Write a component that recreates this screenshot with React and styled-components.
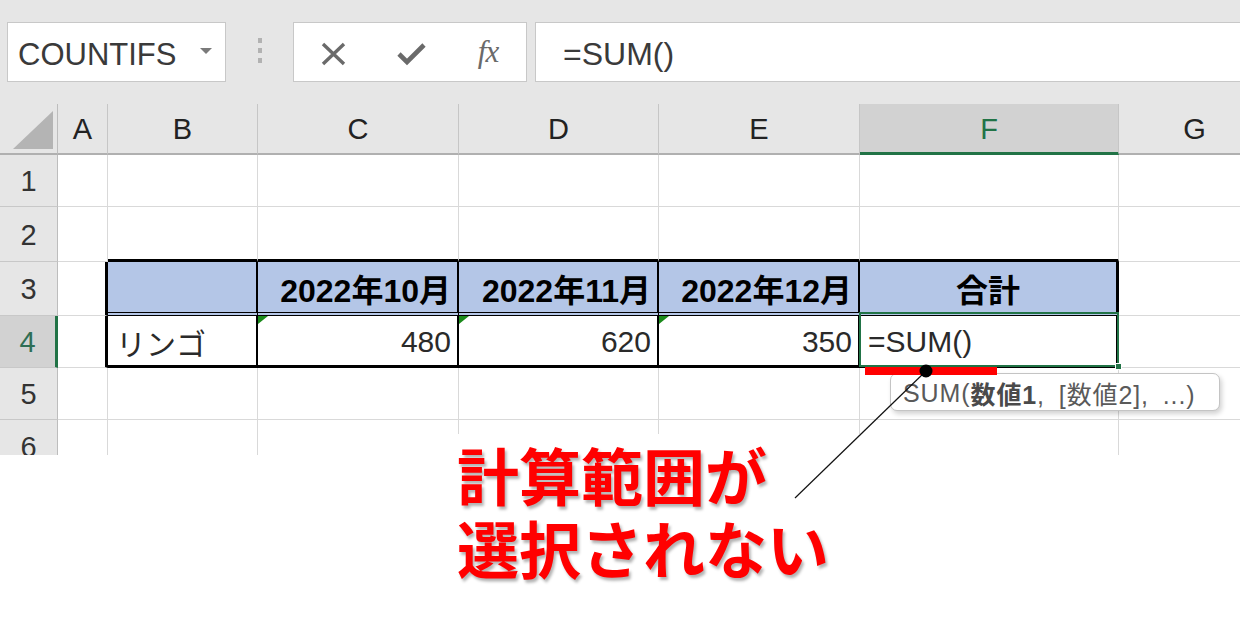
import React from 'react';
import styled, { createGlobalStyle } from 'styled-components';

const Global = createGlobalStyle`
  html, body { margin: 0; padding: 0; background: #fff; }
  body { font-family: "Liberation Sans", "Noto Sans CJK JP", sans-serif; }
  * { box-sizing: border-box; }
`;

const Page = styled.div`
  position: relative;
  width: 1240px;
  height: 639px;
  overflow: hidden;
  background: #fff;
  display: flex;
  flex-direction: column;
`;

const FormulaBar = styled.div`
  height: 104px;
  flex: none;
  background: #e6e6e6;
  display: flex;
  align-items: flex-start;
  padding: 22px 0 0 7px;
`;

const NameBox = styled.div`
  width: 219px;
  height: 60px;
  background: #fff;
  border: 1px solid #c8c8c8;
  display: flex;
  align-items: center;
  justify-content: space-between;
  padding: 5px 13px 0 10px;
  font-size: 31px;
  color: #3a3a3a;
`;

const DropArrow = styled.span`
  width: 0;
  height: 0;
  margin-top: -8px;
  border-left: 6px solid transparent;
  border-right: 6px solid transparent;
  border-top: 6px solid #7a7a7a;
`;

const Grip = styled.div`
  width: 67px;
  height: 60px;
  display: flex;
  flex-direction: column;
  align-items: center;
  justify-content: center;
  gap: 5px;
  padding-bottom: 4px;
`;

const GripDot = styled.span`
  width: 4px;
  height: 5px;
  background: #b2b2b2;
`;

const FuncBox = styled.div`
  width: 234px;
  height: 60px;
  background: #fff;
  border: 1px solid #c8c8c8;
  display: grid;
  grid-template-columns: 78px 78px 76px;
  align-items: center;
  justify-items: center;
  padding-top: 4px;
`;

const FxText = styled.span`
  font-family: "Liberation Serif", serif;
  font-style: italic;
  font-size: 31px;
  color: #6a6a6a;
  letter-spacing: -1px;
  margin-top: -4px;
`;

const FormulaInput = styled.div`
  flex: 1;
  margin-left: 8px;
  height: 60px;
  background: #fff;
  border: 1px solid #c8c8c8;
  border-right: none;
  display: flex;
  align-items: center;
  padding: 4px 0 0 27px;
  font-size: 32px;
  color: #3a3a3a;
`;

const Sheet = styled.div`
  flex: none;
  height: 351px;
  overflow: hidden;
  display: grid;
  grid-template-columns: 58px 50px 150px 201px 200px 201px 259px 152px;
  grid-template-rows: 51px 52px 55px 54px 52px 52px 53px;
  font-size: 29px;
`;

const Corner = styled.div`
  background: #e6e6e6;
  border-right: 1px solid #bdbdbd;
  border-bottom: 2px solid #b0b0b0;
  display: flex;
  align-items: flex-end;
  justify-content: flex-end;
  padding: 0 4px 4px 0;
`;

const ColHead = styled.div`
  background: ${(p) => (p.$active ? '#d2d2d2' : '#e6e6e6')};
  color: ${(p) => (p.$active ? '#217346' : '#222')};
  border-right: 1px solid #c6c6c6;
  border-bottom: ${(p) => (p.$active ? '3px solid #217346' : '2px solid #b0b0b0')};
  display: flex;
  align-items: center;
  justify-content: center;
  padding-top: 2px;
`;

const RowHead = styled.div`
  background: ${(p) => (p.$active ? '#d2d2d2' : '#e6e6e6')};
  color: ${(p) => (p.$active ? '#2f6e55' : '#333')};
  border-right: ${(p) => (p.$active ? '3px solid #217346' : '1px solid #bdbdbd')};
  border-bottom: 1px solid #c8c8c8;
  display: flex;
  align-items: center;
  justify-content: center;
  padding-top: 2px;
`;

const Cell = styled.div`
  position: relative;
  background: ${(p) => (p.$head ? '#b4c6e7' : '#fff')};
  border-right: ${(p) => p.$right};
  border-bottom: ${(p) => p.$bottom};
  display: flex;
  align-items: center;
  justify-content: ${(p) => (p.$align === 'right' ? 'flex-end' : p.$align === 'center' ? 'center' : 'flex-start')};
  padding: 2px 6px 0 ${(p) => (p.$align === 'left' ? '8px' : '6px')};
  font-size: ${(p) => (p.$head ? '32px' : '30px')};
  font-weight: ${(p) => (p.$head ? 700 : 400)};
  color: ${(p) => (p.$head ? '#000' : '#2a2a2a')};
  white-space: nowrap;

  ${(p) =>
    p.$mark &&
    `&::before {
      content: '';
      position: absolute;
      top: 0;
      left: 0;
      width: 0;
      height: 0;
      border-top: 8px solid #1a8a1a;
      border-right: 10px solid transparent;
    }`}

  ${(p) =>
    p.$selected &&
    `&::after {
      content: '';
      position: absolute;
      top: -4px;
      left: -1px;
      right: -3px;
      bottom: -2px;
      border: 2px solid #217346;
    }`}
`;

const FillHandle = styled.span`
  position: absolute;
  right: -6px;
  bottom: -5px;
  width: 7px;
  height: 7px;
  background: #217346;
  border: 1px solid #fff;
  z-index: 2;
`;

const Tooltip = styled.div`
  position: absolute;
  left: 890px;
  top: 373px;
  width: 330px;
  height: 38px;
  background: #fff;
  border: 1px solid #c4c4c4;
  border-radius: 7px;
  box-shadow: 2px 3px 5px rgba(0, 0, 0, 0.18);
  display: flex;
  align-items: center;
  padding: 2px 0 0 12px;
  font-size: 25px;
  color: #5a5a5a;
  white-space: nowrap;
  letter-spacing: 0.9px;
  word-spacing: 6px;
`;

const Strong = styled.b`
  font-weight: 700;
  color: #4a4a4a;
`;

const Callout = styled.div`
  position: absolute;
  left: 400px;
  top: 434px;
  width: 526px;
  height: 205px;
  background: #fff;
  padding: 4px 0 0 57px;
  font-family: "Noto Sans CJK JP", sans-serif;
  font-weight: 700;
  font-size: 62px;
  line-height: 73px;
  color: #ff0000;
  text-shadow: 2px 3px 3px rgba(0, 0, 0, 0.3);
`;

const CalloutLine = styled.div`
  height: 73px;
  white-space: nowrap;
`;

const Overlay = styled.svg`
  position: absolute;
  left: 0;
  top: 0;
  pointer-events: none;
`;

const cols = ['A', 'B', 'C', 'D', 'E', 'F', 'G'];

const data = {
  3: { 1: '', 2: '2022年10月', 3: '2022年11月', 4: '2022年12月', 5: '合計' },
  4: { 1: 'リンゴ', 2: '480', 3: '620', 4: '350', 5: '=SUM()' },
};

const GRID = '1px solid #d9d9d9';

function cellProps(r, c) {
  const inTable = (r === 3 || r === 4) && c >= 1 && c <= 5;
  let right = GRID;
  if (c === 0 && (r === 3 || r === 4)) right = '3px solid #000';
  else if (inTable) right = c === 5 ? '3px solid #000' : '2px solid #000';
  let bottom = GRID;
  if (r === 2 && c >= 1 && c <= 5) bottom = '3px solid #000';
  else if (r === 3 && inTable) bottom = '4px double #000';
  else if (r === 4 && inTable) bottom = '3px solid #000';
  let align = 'left';
  if (r === 3 && c >= 2 && c <= 4) align = 'right';
  if (r === 3 && c === 5) align = 'center';
  if (r === 4 && c >= 2 && c <= 4) align = 'right';
  return {
    $right: right,
    $bottom: bottom,
    $align: align,
    $head: r === 3 && inTable,
    $mark: r === 4 && c >= 2 && c <= 4,
    $selected: r === 4 && c === 5,
  };
}

export default function App() {
  const rows = [1, 2, 3, 4, 5, 6];
  return (
    <Page>
      <Global />
      <FormulaBar>
        <NameBox>
          <span>COUNTIFS</span>
          <DropArrow />
        </NameBox>
        <Grip>
          <GripDot />
          <GripDot />
          <GripDot />
        </Grip>
        <FuncBox>
          <svg width="27" height="24" viewBox="0 0 27 24">
            <path d="M3 2 L24 22 M24 2 L3 22" stroke="#6a6a6a" strokeWidth="3.4" fill="none" />
          </svg>
          <svg width="29" height="24" viewBox="0 0 29 24">
            <path d="M2 12 L10 20 L27 3" stroke="#6a6a6a" strokeWidth="4.6" fill="none" strokeLinejoin="miter" />
          </svg>
          <FxText>fx</FxText>
        </FuncBox>
        <FormulaInput>=SUM()</FormulaInput>
      </FormulaBar>
      <Sheet>
        <Corner>
          <svg width="40" height="38" viewBox="0 0 40 38">
            <polygon points="0,38 40,38 40,0" fill="#b4b4b4" />
          </svg>
        </Corner>
        {cols.map((c) => (
          <ColHead key={c} $active={c === 'F'}>
            {c}
          </ColHead>
        ))}
        {rows.map((r) => (
          <React.Fragment key={r}>
            <RowHead $active={r === 4}>{r}</RowHead>
            {cols.map((c, ci) => {
              const p = cellProps(r, ci);
              const text = data[r] && data[r][ci] !== undefined ? data[r][ci] : '';
              return (
                <Cell key={c} {...p}>
                  {text}
                  {p.$selected && <FillHandle />}
                </Cell>
              );
            })}
          </React.Fragment>
        ))}
      </Sheet>
      <Tooltip>
        SUM(<Strong>数値1</Strong>, [数値2], ...)
      </Tooltip>
      <Callout>
        <CalloutLine>計算範囲が</CalloutLine>
        <CalloutLine>選択されない</CalloutLine>
      </Callout>
      <Overlay width="1240" height="639" viewBox="0 0 1240 639">
        <rect x="865" y="367" width="132" height="8" fill="#ff0000" />
        <line x1="926" y1="371" x2="795" y2="498" stroke="#111" strokeWidth="1.2" />
        <circle cx="926" cy="371" r="6.5" fill="#000" />
      </Overlay>
    </Page>
  );
}
